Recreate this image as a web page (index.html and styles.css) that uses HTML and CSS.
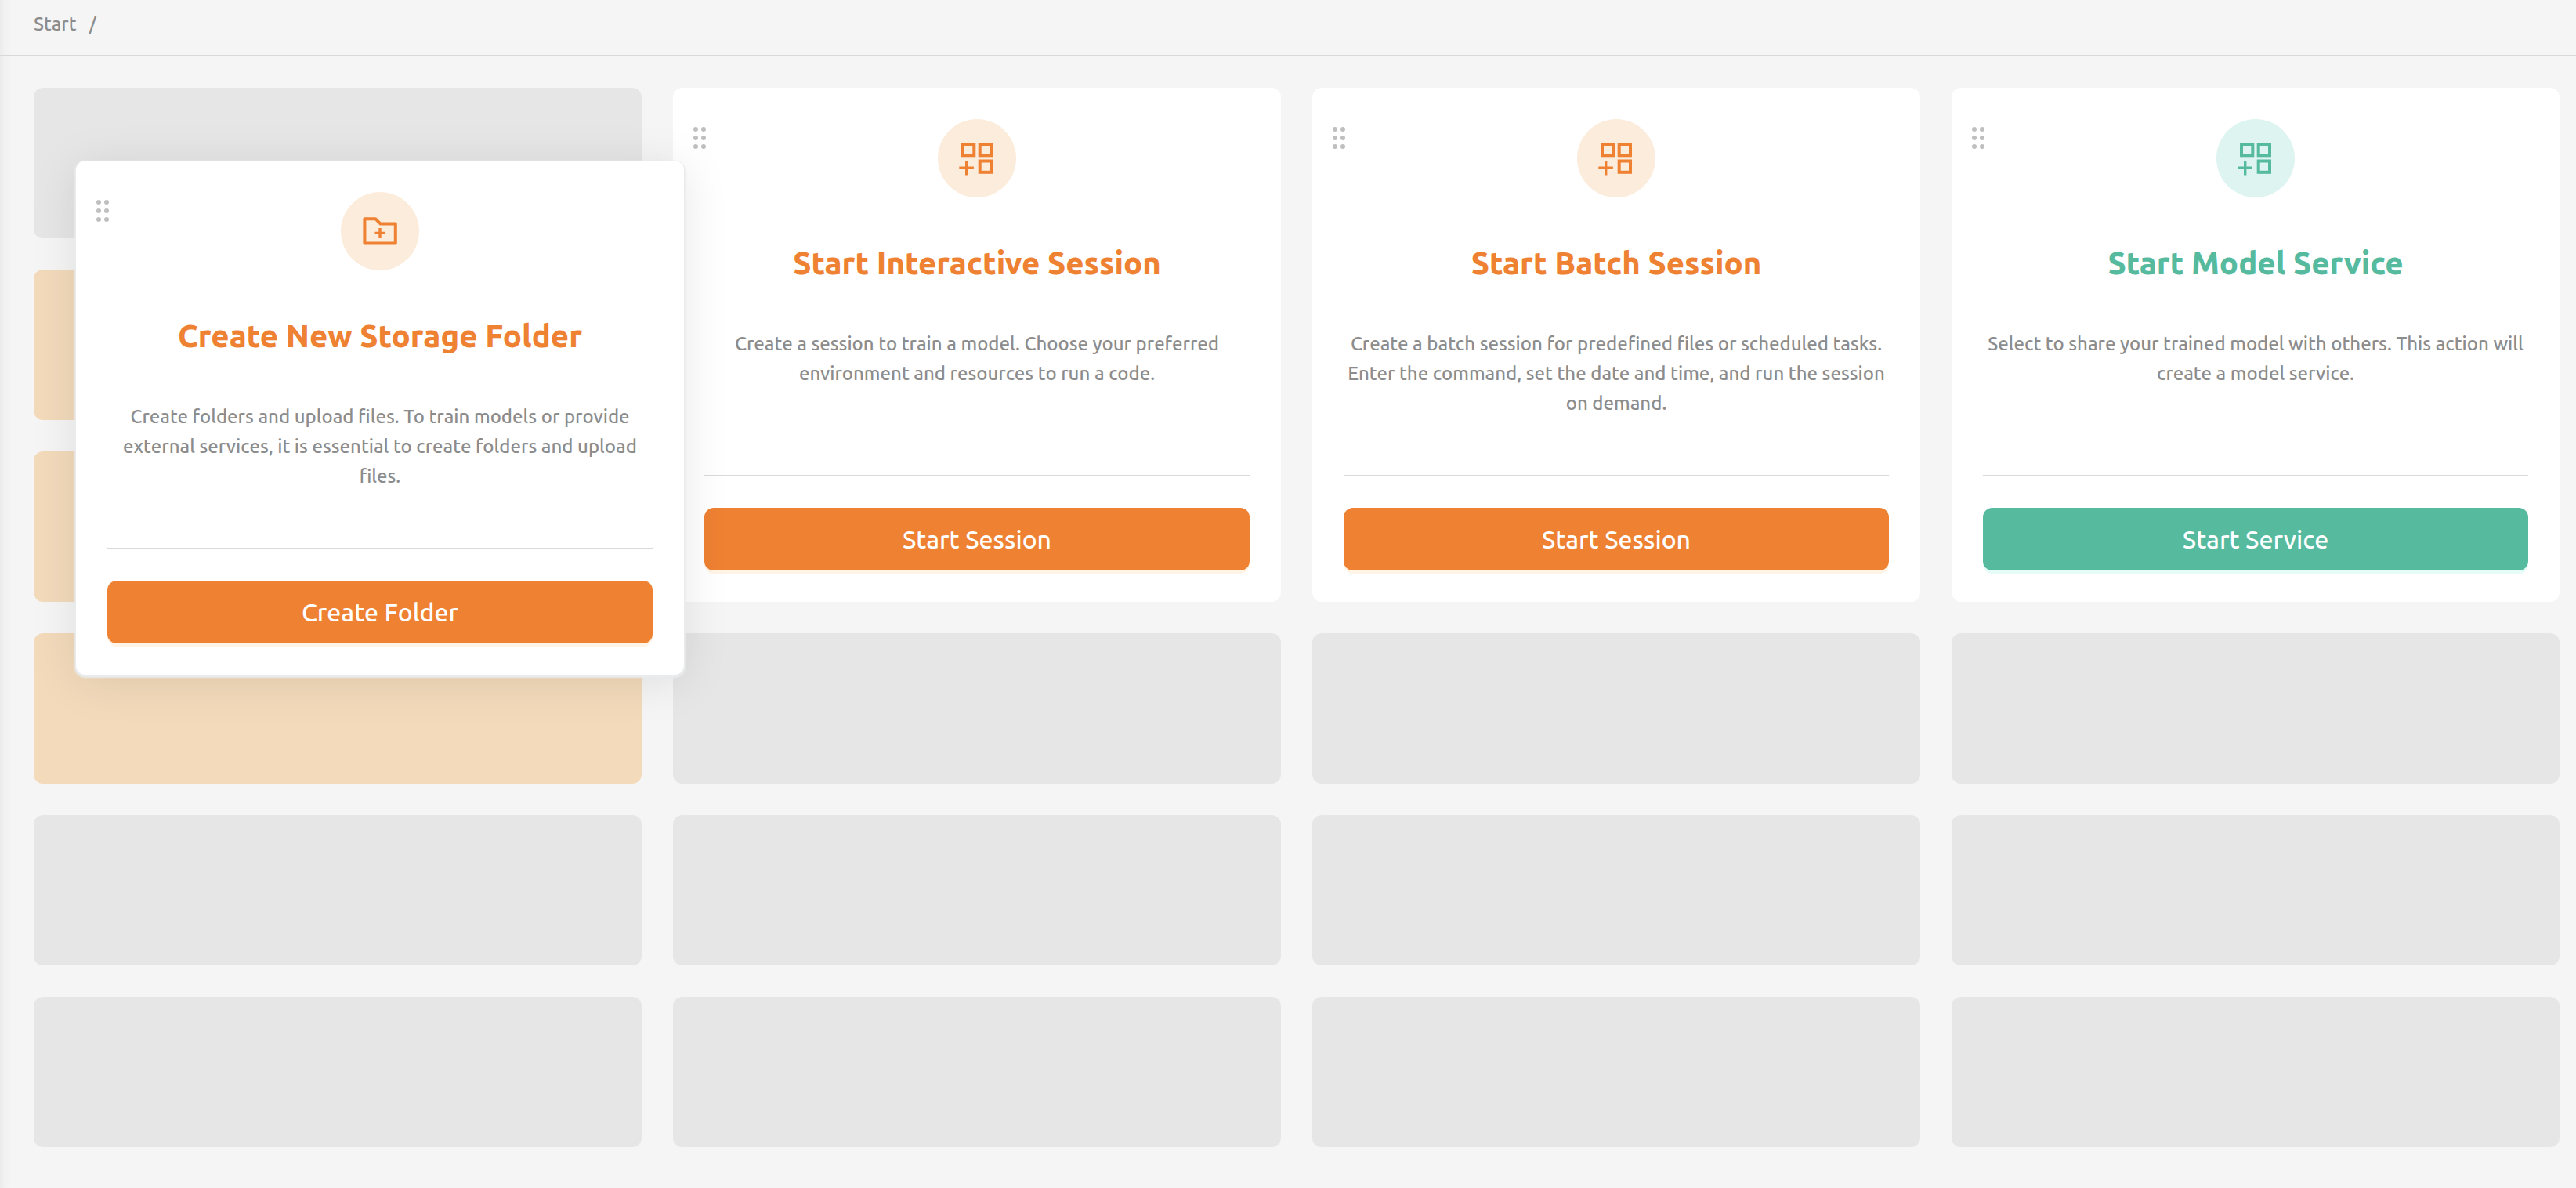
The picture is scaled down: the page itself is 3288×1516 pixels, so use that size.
FILE: index.html
```html
<!DOCTYPE html>
<html lang="en">
<head>
<meta charset="utf-8">
<meta name="viewport" content="width=device-width, initial-scale=1">
<title>Start</title>
<link rel="stylesheet" href="styles.css">
</head>
<body>
<svg class="sprite" aria-hidden="true">
  <symbol id="handle" viewBox="0 0 16 28">
    <g fill="currentColor">
      <circle cx="3" cy="3" r="3"/><circle cx="13" cy="3" r="3"/>
      <circle cx="3" cy="14" r="3"/><circle cx="13" cy="14" r="3"/>
      <circle cx="3" cy="25" r="3"/><circle cx="13" cy="25" r="3"/>
    </g>
  </symbol>
  <symbol id="session" viewBox="0 0 100 100">
    <g fill="none" stroke="currentColor" stroke-width="4">
      <rect x="32" y="32" width="14.3" height="14.3"/>
      <rect x="53.7" y="32" width="14.3" height="14.3"/>
      <rect x="53.7" y="53.5" width="14.3" height="14.3"/>
      <path d="M36.7 53v18.5M27.3 62.3h18.6" stroke-width="3.4"/>
    </g>
  </symbol>
  <symbol id="folder" viewBox="0 0 100 100">
    <g fill="none" stroke="currentColor" stroke-width="4" stroke-linejoin="round">
      <path d="M30.4 34.2h13.8l6.2 6.2h19.4v25H30.4z"/>
      <path d="M50 46v13M43.5 52.4h13" stroke-width="3.4"/>
    </g>
  </symbol>
</svg>

<header class="topbar">
  <nav class="crumbs" aria-label="Breadcrumb">
    <a href="#">Start</a>
    <span>/</span>
  </nav>
</header>

<main class="board">
  <div class="slot r1 c1"></div>
  <div class="slot target r2 c1"></div>
  <div class="slot target r3 c1"></div>
  <div class="slot target r4 c1"></div>
  <div class="slot r5 c1"></div>
  <div class="slot r6 c1"></div>

  <article class="card dragging c1">
    <svg class="handle" aria-hidden="true"><use href="#handle"/></svg>
    <div class="badge"><svg aria-hidden="true"><use href="#folder"/></svg></div>
    <h2>Create New Storage Folder</h2>
    <p>Create folders and upload files. To train models or provide external services, it is essential to create folders and upload files.</p>
    <footer><button type="button">Create Folder</button></footer>
  </article>

  <article class="card c2">
    <svg class="handle" aria-hidden="true"><use href="#handle"/></svg>
    <div class="badge"><svg aria-hidden="true"><use href="#session"/></svg></div>
    <h2>Start Interactive Session</h2>
    <p>Create a session to train a model. Choose your preferred environment and resources to run a code.</p>
    <footer><button type="button">Start Session</button></footer>
  </article>

  <article class="card c3">
    <svg class="handle" aria-hidden="true"><use href="#handle"/></svg>
    <div class="badge"><svg aria-hidden="true"><use href="#session"/></svg></div>
    <h2>Start Batch Session</h2>
    <p>Create a batch session for predefined files or scheduled tasks. Enter the command, set the date and time, and run the session on demand.</p>
    <footer><button type="button">Start Session</button></footer>
  </article>

  <article class="card service c4">
    <svg class="handle" aria-hidden="true"><use href="#handle"/></svg>
    <div class="badge"><svg aria-hidden="true"><use href="#session"/></svg></div>
    <h2>Start Model Service</h2>
    <p>Select to share your trained model with others. This action will create a model service.</p>
    <footer><button type="button">Start Service</button></footer>
  </article>

  <div class="slot r4 c2"></div>
  <div class="slot r4 c3"></div>
  <div class="slot r4 c4"></div>
  <div class="slot r5 c2"></div>
  <div class="slot r5 c3"></div>
  <div class="slot r5 c4"></div>
  <div class="slot r6 c2"></div>
  <div class="slot r6 c3"></div>
  <div class="slot r6 c4"></div>
</main>
</body>
</html>
```
FILE: styles.css
```css
* {
  box-sizing: border-box;
}

body {
  margin: 0;
  min-height: 100vh;
  background: linear-gradient(to right, #ebebeb, #f2f2f2 6px, #f5f5f5 16px);
  color: #8c8c8c;
  font-family: Ubuntu, "Noto Sans", sans-serif;
  font-size: 24px;
  font-weight: 500;
  line-height: 38px;
}

.sprite {
  position: absolute;
  width: 0;
  height: 0;
}

.topbar {
  height: 72px;
  padding: 12px 43px;
  border-bottom: 2px solid #d9d9d9;
}

.crumbs {
  display: flex;
  gap: 16px;
}

.crumbs a {
  color: inherit;
  text-decoration: none;
}

.board {
  display: grid;
  grid-template-columns: repeat(4, minmax(0, 1fr));
  grid-auto-rows: 192px;
  gap: 40px;
  padding: 40px 21px 52px 43px;
}

.c1 { grid-column: 1; }
.c2 { grid-column: 2; }
.c3 { grid-column: 3; }
.c4 { grid-column: 4; }
.r1 { grid-row: 1; }
.r2 { grid-row: 2; }
.r3 { grid-row: 3; }
.r4 { grid-row: 4; }
.r5 { grid-row: 5; }
.r6 { grid-row: 6; }

.slot {
  border-radius: 12px;
  background: #e6e6e6;
}

.target {
  background: #f3dabb;
}

.card {
  --accent: #ee8132;
  --tint: #fcecdc;
  --glow: #fff4e6;
  grid-row: 1 / span 3;
  position: relative;
  display: flex;
  flex-direction: column;
  align-items: center;
  padding: 40px;
  border-radius: 12px;
  background: #fff;
  text-align: center;
}

.service {
  --accent: #56ba9f;
  --tint: #ddf4f0;
  --glow: #e6fcf7;
}

.dragging {
  left: 54px;
  top: 93px;
  z-index: 1;
  box-shadow: 0 2px 2px 2px #e9ebec, 0 8px 60px rgba(0, 0, 0, 0.1);
}

.handle {
  position: absolute;
  left: 26px;
  top: 50px;
  width: 16px;
  height: 28px;
  color: #bfbfbf;
}

.badge {
  width: 100px;
  height: 100px;
  border-radius: 50%;
  background: var(--tint);
  color: var(--accent);
}

.badge svg {
  display: block;
  width: 100%;
  height: 100%;
}

.card h2 {
  margin: 56px 0;
  color: var(--accent);
  font-size: 40px;
  font-weight: 800;
  line-height: 56px;
}

.card p {
  margin: 0;
}

.card footer {
  align-self: stretch;
  margin-top: auto;
  padding-top: 40px;
  border-top: 2px solid #d9d9d9;
}

.card button {
  display: block;
  width: 100%;
  height: 80px;
  border: 0;
  border-radius: 12px;
  background: var(--accent);
  box-shadow: 0 4px 0 var(--glow);
  color: #fff;
  font: inherit;
  font-size: 32px;
}
```
